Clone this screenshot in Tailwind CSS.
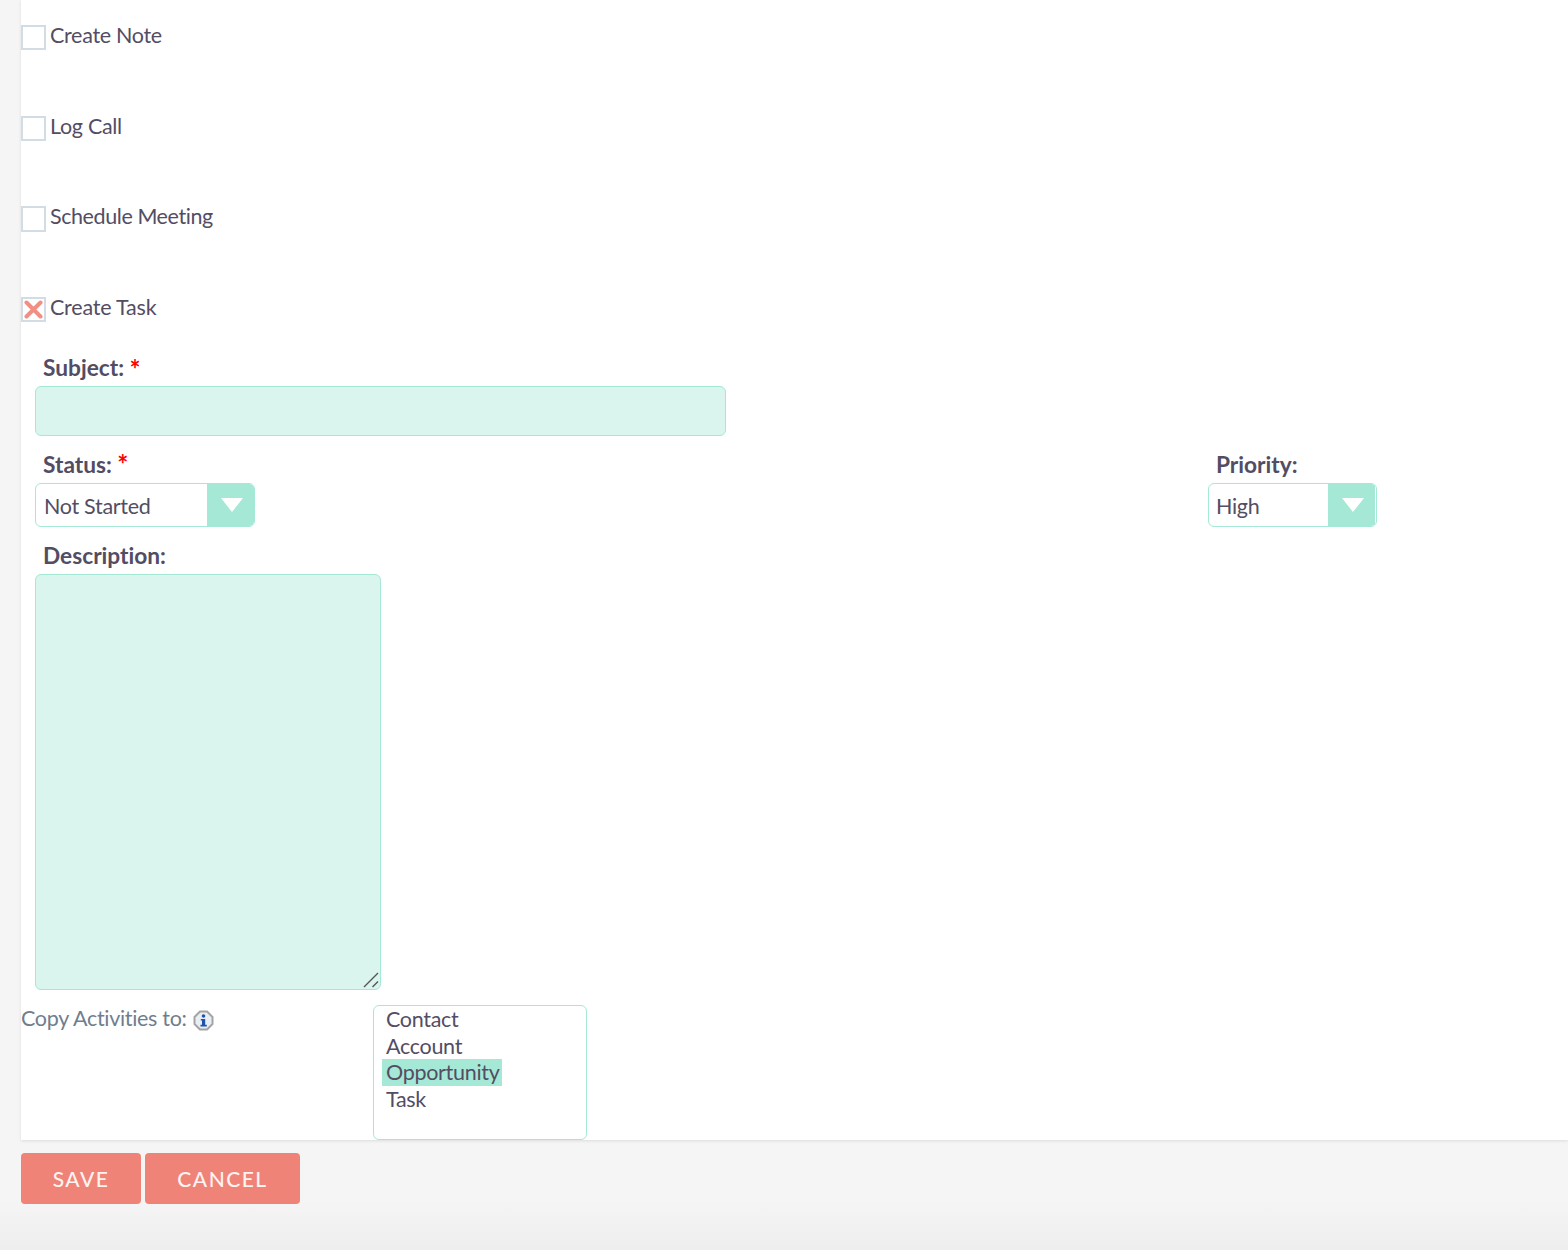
<!DOCTYPE html>
<html>
<head>
<meta charset="utf-8">
<script src="https://cdn.jsdelivr.net/npm/@tailwindcss/browser@4"></script>
</head>
<body class="m-0 h-[1250px] w-[1568px] overflow-hidden bg-[#f5f5f5] font-['Lato',sans-serif] text-[21.5px] leading-[26px] tracking-[-0.3px] text-[#534d64] [font-variant-ligatures:none]">
<div class="relative h-[1250px] bg-gradient-to-b from-[#f5f5f5] from-[96%] to-[#eeeeee] pl-[21px]">
  <main class="h-[1140px] bg-white shadow-[0_1px_3px_rgba(0,0,0,0.1)]">
    <div class="flex flex-col pt-[25px]">
      <label class="flex h-[25px] items-start"><span class="h-[25px] w-[25px] border-2 border-[#d2dce4] bg-white"></span><span class="ml-1 mt-[-3px]">Create Note</span></label>
      <label class="mt-[66px] flex h-[25px] items-start"><span class="h-[25px] w-[25px] border-2 border-[#d2dce4] bg-white"></span><span class="ml-1 mt-[-3px]">Log Call</span></label>
      <label class="mt-[65px] flex h-[26px] items-start"><span class="h-[26px] w-[25px] border-2 border-[#d2dce4] bg-white"></span><span class="ml-1 mt-[-3px] tracking-[-0.42px]">Schedule Meeting</span></label>
      <label class="mt-[65px] flex h-[25px] items-start">
        <span class="flex h-[25px] w-[25px] items-center justify-center border-2 border-[#d2dce4] bg-white">
          <svg width="19" height="19" viewBox="0 0 19 19"><path d="M2.5 2.5L16.5 16.5M16.5 2.5L2.5 16.5" stroke="#f08377" stroke-width="4" stroke-linecap="round" opacity="0.9"/></svg>
        </span>
        <span class="ml-1 mt-[-3px] tracking-[-0.2px]">Create Task</span>
      </label>
    </div>

    <div class="pl-[14px]">
      <div class="mt-[33px] pl-[8px] text-[22.7px] font-bold tracking-normal"><span>Subject:</span> <span class="relative top-[3px] text-[26px] leading-[20px] text-[#ff0000]">*</span></div>
      <div class="mt-[5px] h-[50px] w-[691px] rounded-[6px] border border-[#a5e8d6] bg-[#d9f5ee]"></div>

      <div class="mt-[16px] flex justify-between pr-[191px]">
        <div>
          <div class="pl-[8px] text-[22.7px] font-bold tracking-normal"><span>Status:</span> <span class="relative top-[1px] text-[26px] leading-[20px] text-[#ff0000]">*</span></div>
          <div class="mt-[5px] flex h-[44px] w-[220px] overflow-hidden rounded-[6px] border border-[#a5e8d6] bg-white">
            <span class="flex-1 pl-[8px] leading-[44px]">Not Started</span>
            <span class="flex w-[47px] items-center justify-center bg-[#a5e8d6] pl-[2px]">
              <svg width="22" height="14" viewBox="0 0 22 14"><path d="M0 0H22L11 14Z" fill="#fff"/></svg>
            </span>
          </div>
        </div>
        <div>
          <div class="pl-[8px] text-[22.7px] font-bold tracking-normal">Priority:</div>
          <div class="mt-[5px] flex h-[44px] w-[169px] overflow-hidden rounded-[6px] border border-[#a5e8d6] bg-white">
            <span class="flex-1 pl-[7px] leading-[44px]">High</span>
            <span class="mr-px flex w-[47px] items-center justify-center bg-[#a5e8d6] pl-[2px]">
              <svg width="22" height="14" viewBox="0 0 22 14"><path d="M0 0H22L11 14Z" fill="#fff"/></svg>
            </span>
          </div>
        </div>
      </div>

      <div class="mt-[16px] pl-[8px] text-[22.7px] font-bold tracking-normal">Description:</div>
      <div class="relative mt-[5px] h-[416px] w-[346px] rounded-[6px] border border-[#a5e8d6] bg-[#d9f5ee]">
        <svg class="absolute bottom-[1px] right-[1px]" width="16" height="16" viewBox="0 0 16 16"><path d="M1 15L15 1M9.5 15L15 9.5" stroke="#555" stroke-width="1.4"/></svg>
      </div>
    </div>

    <div class="mt-[15px] flex">
      <div class="flex h-[30px] w-[352px] items-start text-[#6f7e8e]">
        <span>Copy Activities to:</span>
        <svg class="ml-[6px] mt-[5px]" width="21" height="21" viewBox="0 0 21 21">
          <path d="M7 1.5H14L19.5 7V14L14 19.5H7L1.5 14V7Z" fill="#e9eef4" stroke="#a3a3a3" stroke-width="2" stroke-linejoin="round"/>
          <circle cx="10.5" cy="6" r="1.8" fill="#1f55a8"/>
          <path d="M7.8 9H12.2V14.8H13.8V16.5H7.5V14.8H9V10.4H7.8Z" fill="#1f55a8"/>
        </svg>
      </div>
      <div class="h-[135px] w-[214px] rounded-[6px] border border-[#a5e8d6] bg-white pl-[8px]">
        <div class="h-[26.5px] px-1">Contact</div>
        <div class="h-[26.5px] px-1">Account</div>
        <div class="h-[26.5px] w-fit bg-[#a5e8d6] pl-1 pr-[3px]">Opportunity</div>
        <div class="h-[26.5px] px-1">Task</div>
      </div>
    </div>
  </main>

  <div class="mt-[13px] flex gap-1">
    <button class="h-[51px] w-[120px] rounded-[4px] bg-[#f08377] text-[21px] font-medium tracking-[1.5px] text-[#fdf3f1]">SAVE</button>
    <button class="h-[51px] w-[155px] rounded-[4px] bg-[#f08377] text-[21px] font-medium tracking-[1.5px] text-[#fdf3f1]">CANCEL</button>
  </div>
</div>
</body>
</html>
